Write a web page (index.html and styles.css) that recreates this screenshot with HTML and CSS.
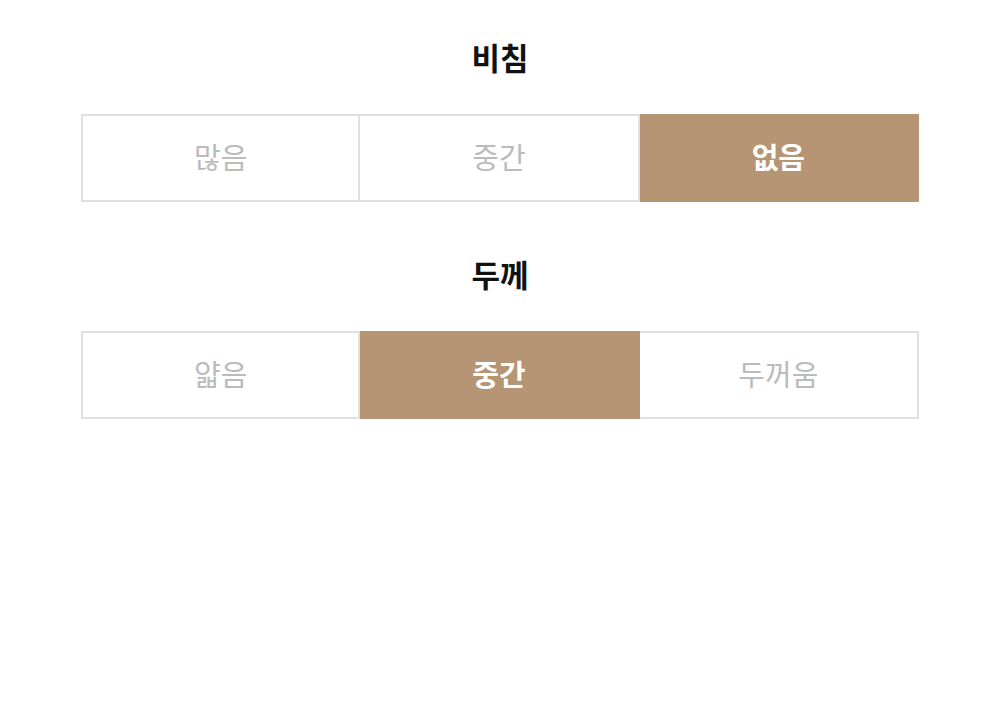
FILE: index.html
```html
<!DOCTYPE html>
<html lang="ko">
<head>
    <meta charset="UTF-8">
    <meta name="viewport" content="width=device-width, initial-scale=1.0">
    <title>옵션 선택</title>
    <link rel="stylesheet" href="styles.css">
</head>
<body>
    <div class="container">
        <div class="option-group">
            <h2 class="option-title">비침</h2>
            <div class="segment">
                <button class="segment-item">많음</button>
                <button class="segment-item">중간</button>
                <button class="segment-item active">없음</button>
            </div>
        </div>

        <div class="option-group">
            <h2 class="option-title">두께</h2>
            <div class="segment">
                <button class="segment-item">얇음</button>
                <button class="segment-item active">중간</button>
                <button class="segment-item">두꺼움</button>
            </div>
        </div>
    </div>
</body>
</html>
```

FILE: styles.css
```css
body {
    margin: 0;
    background-color: #fff;
    font-family: "Noto Sans CJK KR", "Noto Sans", sans-serif;
}

.container {
    width: 838px;
    margin: 0 auto;
    padding-top: 37px;
    display: flex;
    flex-direction: column;
    gap: 52px;
}

.option-title {
    margin: 0 0 37px;
    font-size: 31px;
    line-height: 40px;
    font-weight: 700;
    color: #111;
    text-align: center;
}

.segment {
    display: grid;
    grid-template-columns: repeat(3, 1fr);
    height: 88px;
}

.segment-item {
    border: 2px solid #e0e0e0;
    background-color: #fff;
    color: #bbb;
    font-family: inherit;
    font-size: 29px;
    font-weight: 400;
    padding: 0 0 5px;
    cursor: pointer;
}

.segment-item + .segment-item {
    border-left: none;
}

.segment-item.active {
    background-color: #b59574;
    border-color: #b59574;
    color: #fff;
    font-weight: 700;
}
```
